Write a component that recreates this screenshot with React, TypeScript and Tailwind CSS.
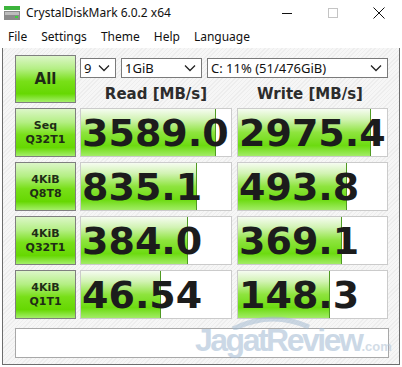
import React from 'react';

type Row = { a: string; b: string; read: string; write: string; rf: number; wf: number };

const rows: Row[] = [
  { a: 'Seq', b: 'Q32T1', read: '3589.0', write: '2975.4', rf: 0.9, wf: 0.89 },
  { a: '4KiB', b: 'Q8T8', read: '835.1', write: '493.8', rf: 0.77, wf: 0.73 },
  { a: '4KiB', b: 'Q32T1', read: '384.0', write: '369.1', rf: 0.71, wf: 0.7 },
  { a: '4KiB', b: 'Q1T1', read: '46.54', write: '148.3', rf: 0.53, wf: 0.62 },
];

const greenBtn =
  'border border-[#7f7f7f] bg-[linear-gradient(to_bottom,#dcf6c8_0%,#b4ef84_28%,#78df18_55%,#66d802_82%,#a4ef6a_100%)]';

const Chevron = () => (
  <svg width="12" height="8" viewBox="0 0 12 8" className="shrink-0">
    <path d="M1 1.5 L6 6.5 L11 1.5" fill="none" stroke="#222" strokeWidth="1.3" />
  </svg>
);

const Combo = ({ text, className }: { text: string; className: string }) => (
  <div className={`h-[20px] bg-white border border-[#7a7a7a] flex items-center justify-between pl-[3px] pr-[5px] text-[13px] text-[#111] ${className}`}>
    <span className="leading-none">{text}</span>
    <Chevron />
  </div>
);

const Bar = ({ value, frac, w }: { value: string; frac: number; w: string }) => (
  <div className={`relative h-full ${w} bg-white border border-[#cbcbcb] overflow-hidden`}>
    <div
      className="absolute left-0 top-0 bottom-0 border-r border-[#4f9a22] bg-[linear-gradient(to_bottom,#f6fcf1_0%,#d2f3b4_22%,#8ee43e_50%,#6cdb10_78%,#a2ec66_100%)]"
      style={{ width: `${frac * 100}%` }}
    />
    <div className="relative h-full flex items-center pl-[1px] text-[38px] font-bold text-[#1c1c1c] leading-none [font-family:'DejaVu_Sans',sans-serif]">
      {value}
    </div>
  </div>
);

export default function App() {
  return (
    <div className="relative w-[402px] h-[367px] bg-white overflow-hidden flex flex-col [font-family:'Noto_Sans','Open_Sans',sans-serif]">
      {/* title bar */}
      <div className="h-[26px] flex items-center shrink-0">
        <svg width="16" height="16" viewBox="0 0 16 16" className="ml-[4px]">
          <rect x="0" y="1" width="16" height="4" fill="#3cb43c" />
          <rect x="0" y="6" width="16" height="9" fill="#8a8a8a" />
          <rect x="1" y="7" width="14" height="3" fill="#bdbdbd" />
          <rect x="11" y="11" width="3" height="2" fill="#3cd03c" />
        </svg>
        <span className="ml-[6px] text-[12px] text-[#111]">CrystalDiskMark 6.0.2 x64</span>
        <div className="ml-auto flex items-center h-full">
          <div className="w-[46px] flex justify-center">
            <div className="w-[10px] h-[1px] bg-[#111]" />
          </div>
          <div className="w-[46px] flex justify-center">
            <div className="w-[10px] h-[10px] border border-[#c4c4c4]" />
          </div>
          <div className="w-[46px] flex justify-center">
            <svg width="12" height="12" viewBox="0 0 12 12">
              <path d="M0.5 0.5 L11.5 11.5 M11.5 0.5 L0.5 11.5" stroke="#111" strokeWidth="1" />
            </svg>
          </div>
        </div>
      </div>

      {/* menu bar */}
      <div className="h-[22px] flex items-center gap-[14px] pl-[8px] text-[12px] text-[#111] shrink-0">
        <span>File</span>
        <span>Settings</span>
        <span>Theme</span>
        <span>Help</span>
        <span>Language</span>
      </div>

      {/* client */}
      <div className="flex-1 mx-[2px] mb-[2px] border-l border-r border-b border-[#6d6d6d] bg-[repeating-linear-gradient(135deg,#f6f6f6_0px,#f6f6f6_2px,#ededed_2px,#ededed_3px)] pl-[12px] pt-[7px] flex flex-col">
        <div className="flex h-[48px] gap-[4px]">
          <div className={`w-[61px] h-full flex items-center justify-center text-[15px] font-bold text-[#1f2a16] [font-family:'DejaVu_Sans',sans-serif] ${greenBtn}`}>
            All
          </div>
          <div className="flex flex-col w-[308px]">
            <div className="flex gap-[5px] mt-[3px]">
              <Combo text="9" className="w-[36px]" />
              <Combo text="1GiB" className="w-[81px]" />
              <Combo text="C: 11% (51/476GiB)" className="w-[181px]" />
            </div>
            <div className="flex mt-[9px] text-[15px] font-bold text-[#2c2c2c] leading-none [font-family:'DejaVu_Sans',sans-serif]">
              <div className="w-[152px] text-center">Read [MB/s]</div>
              <div className="w-[156px] text-center">Write [MB/s]</div>
            </div>
          </div>
        </div>

        <div className="flex flex-col gap-[5px] mt-[5px]">
          {rows.map((r, i) => (
            <div key={i} className="flex h-[49px]">
              <div className={`w-[61px] h-full flex flex-col items-center justify-center text-[11px] leading-[14px] font-bold text-[#1f2d16] [font-family:'DejaVu_Sans',sans-serif] ${greenBtn}`}>
                <span>{r.a}</span>
                <span>{r.b}</span>
              </div>
              <div className="ml-[4px]">
                <Bar value={r.read} frac={r.rf} w="w-[152px]" />
              </div>
              <div className="ml-[5px]">
                <Bar value={r.write} frac={r.wf} w="w-[151px]" />
              </div>
            </div>
          ))}
        </div>

        <div className="mt-[9px] w-[374px] h-[30px] bg-white border border-[#a8a8a8]" />
      </div>

      {/* watermark */}
      <div className="absolute left-[195px] top-[316px] pointer-events-none select-none">
        <svg width="80" height="14" viewBox="0 0 80 14" className="absolute left-[36px] top-[0px] opacity-50">
          <path d="M2 13 Q40 -6 78 11" fill="none" stroke="#9fb8d0" strokeWidth="5" />
        </svg>
        <div className="flex items-end mt-[8px] opacity-60">
          <span className="text-[32px] font-bold tracking-[-2.5px] leading-none text-[#a9bfd6] [font-family:'Liberation_Sans',sans-serif]">
            JagatReview
          </span>
          <span className="text-[13px] font-bold leading-none text-[#b5c6d6] mb-[3px] [font-family:'Liberation_Sans',sans-serif]">
            .com
          </span>
        </div>
      </div>
    </div>
  );
}
